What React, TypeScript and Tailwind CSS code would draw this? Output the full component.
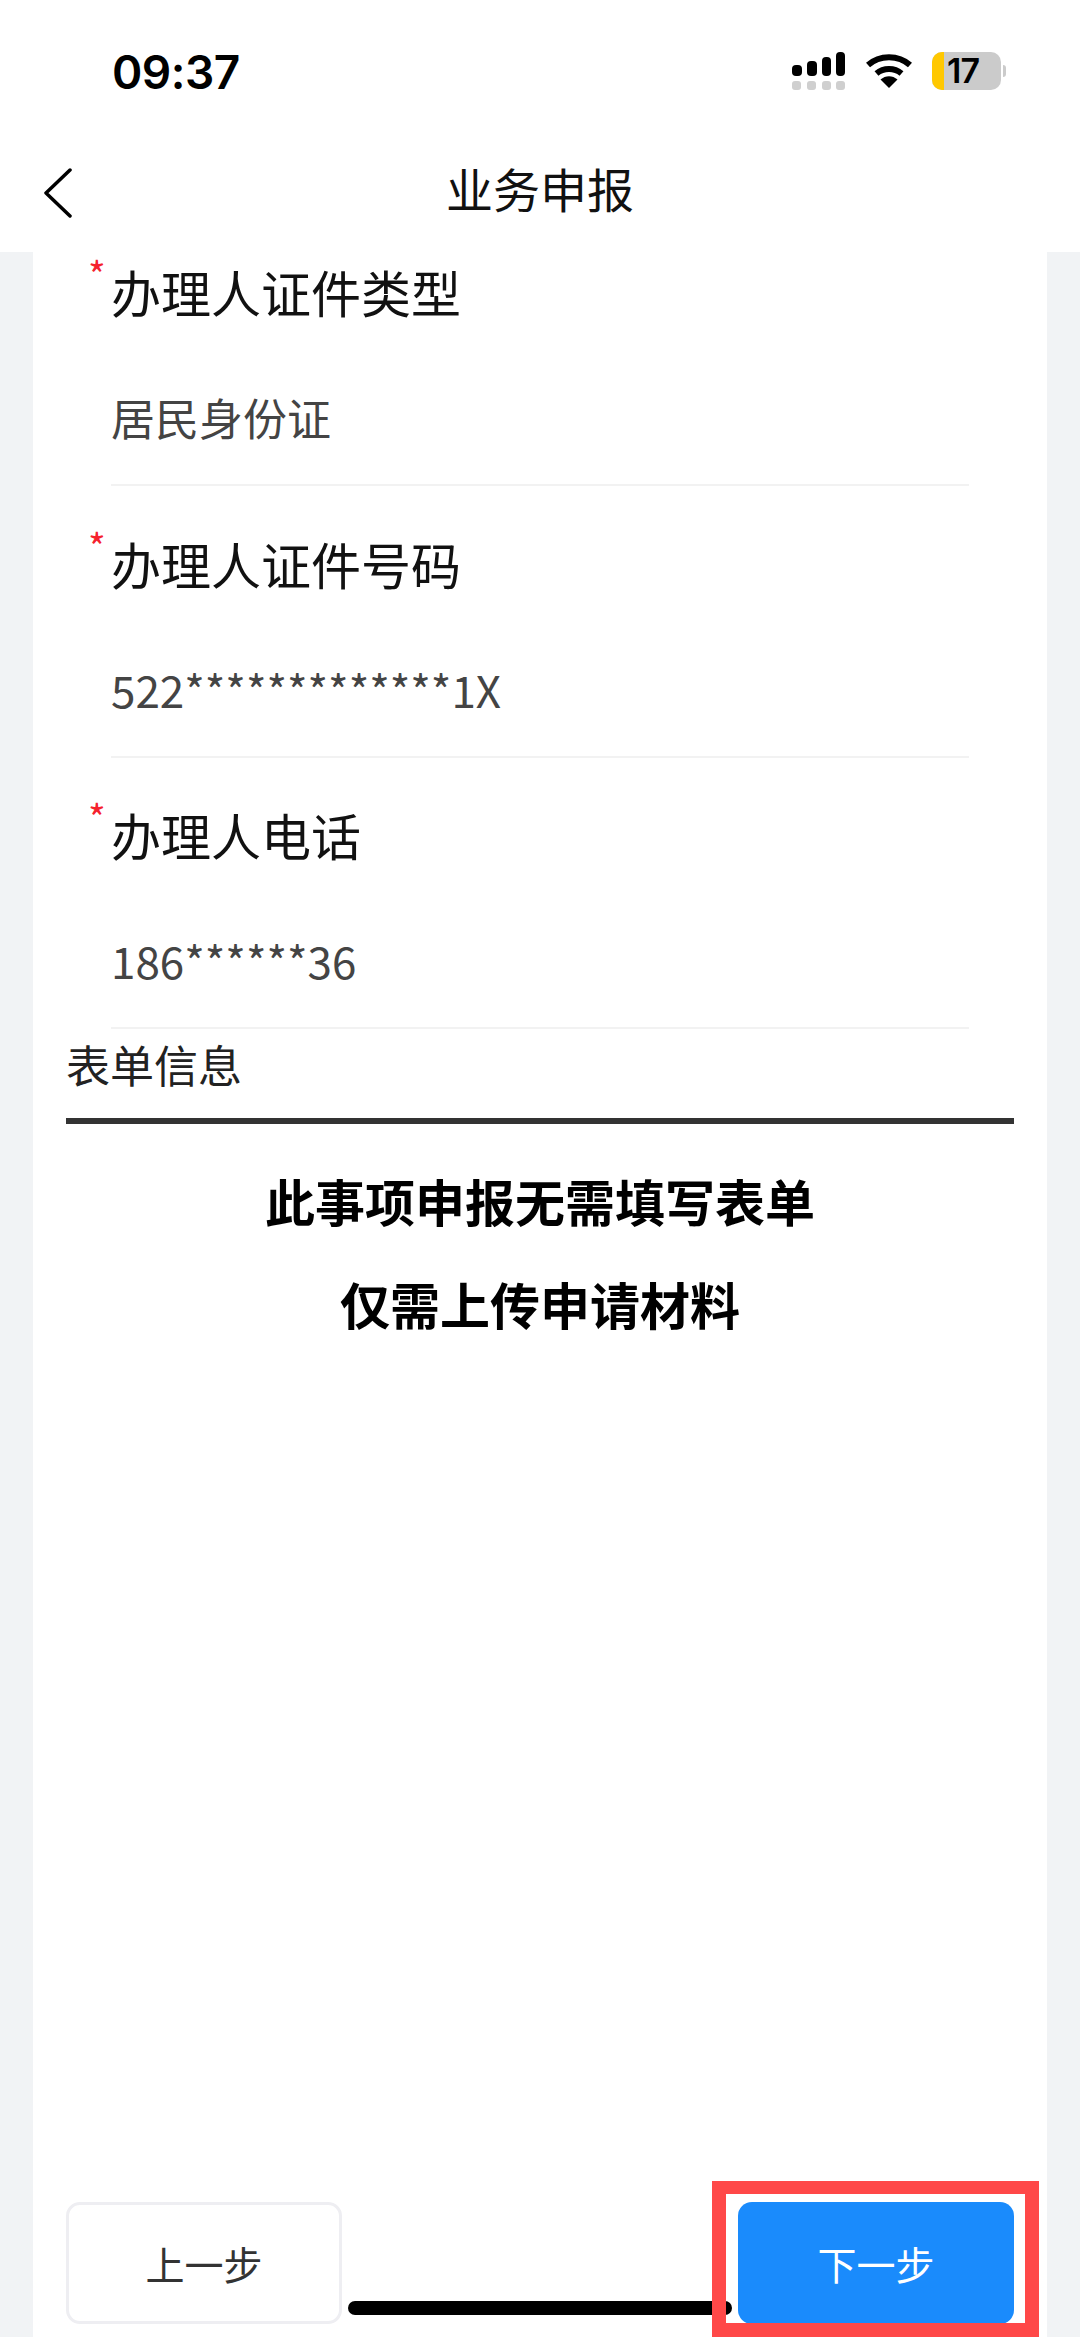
const cjk = "font-['Noto_Sans_CJK_SC',sans-serif]";

const fields = [
  { label: "办理人证件类型", value: "居民身份证" },
  { label: "办理人证件号码", value: "522*************1X" },
  { label: "办理人电话", value: "186******36" },
];

function SignalIcon() {
  return (
    <svg width="54" height="38" viewBox="0 0 54 38">
      <rect x="0" y="13" width="10" height="11" rx="4" fill="#000" />
      <rect x="15" y="9" width="10" height="15" rx="4" fill="#000" />
      <rect x="30" y="5" width="9" height="19" rx="4" fill="#000" />
      <rect x="44" y="0" width="9" height="24" rx="4" fill="#000" />
      <rect x="0" y="29" width="9" height="9" rx="3" fill="#cfcfcf" />
      <rect x="15" y="29" width="9" height="9" rx="3" fill="#cfcfcf" />
      <rect x="30" y="29" width="9" height="9" rx="3" fill="#cfcfcf" />
      <rect x="44" y="29" width="9" height="9" rx="3" fill="#cfcfcf" />
    </svg>
  );
}

function WifiIcon() {
  return (
    <svg width="46" height="36" viewBox="0 0 46 36" fill="none">
      <path d="M2 12C13.5 1.5 32.5 1.5 44 12" stroke="#000" strokeWidth="6" />
      <path d="M10.5 20.5C17.5 14.5 28.5 14.5 35.5 20.5" stroke="#000" strokeWidth="6" />
      <path d="M14.5 26.5C19.5 22 26.5 22 31.5 26.5L23 35Z" fill="#000" />
    </svg>
  );
}

function Battery() {
  return (
    <div className="flex items-center gap-[2px]">
      <div className="flex h-[38px] w-[69px] items-center rounded-[10px] bg-[#cbcbcb]">
        <div className="h-full w-[12px] rounded-l-[10px] bg-[#ffc800]" />
        <span className="ml-[3px] font-['Inter',sans-serif] text-[34px] font-semibold leading-none tracking-[-1px] text-black">17</span>
      </div>
      <div className="h-[12px] w-[3px] rounded-r-full bg-[#cbcbcb]" />
    </div>
  );
}

export default function App() {
  return (
    <div className={`relative flex h-[2337px] w-[1080px] flex-col overflow-hidden bg-[#f1f3f5] ${cjk}`}>
      {/* Status bar + title */}
      <div className="h-[252px] shrink-0 bg-white">
        <div className="flex h-[144px] items-start justify-between pl-[112px] pr-[74px] pt-[46px]">
          <span className="font-['Inter',sans-serif] text-[46px] font-semibold leading-[52px] tracking-[-0.5px] text-black">09:37</span>
          <div className="flex items-center gap-[20px] pt-[6px]">
            <SignalIcon />
            <WifiIcon />
            <Battery />
          </div>
        </div>
        <div className="relative flex h-[92px] items-center justify-center">
          <svg className="absolute left-[44px] top-[24px]" width="28" height="50" viewBox="0 0 28 50" fill="none">
            <path d="M26 2L2 25L26 48" stroke="#000" strokeWidth="3.5" strokeLinecap="round" strokeLinejoin="round" />
          </svg>
          <span className="mb-[6px] text-[47px] leading-none text-[#111]">业务申报</span>
        </div>
      </div>

      {/* Form card */}
      <div className="mx-[33px] flex min-h-0 flex-1 flex-col bg-white">
        <div className="px-[78px]">
          {fields.map((f) => (
            <div key={f.label} className="flex h-[271.5px] flex-col justify-end border-b-2 border-[#f2f2f2] first:h-[234px]">
              <div className="relative flex h-[60px] items-center text-[50px] leading-none text-[#111]">
                <span className="absolute left-[-23px] top-[-6px] text-[38px] leading-none text-[#f5222d]">*</span>
                {f.label}
              </div>
              <div className="mb-[37px] mt-[66px] flex h-[60px] items-center text-[44px] leading-none text-[#444]">{f.value}</div>
            </div>
          ))}
        </div>

        <div className="px-[33px]">
          <div className="flex h-[95px] items-center border-b-[6px] border-[#333] pb-[20px] text-[44px] leading-none text-[#222]">表单信息</div>
          <div className="pt-[25px] text-center text-[50px] font-bold leading-[103px] text-black">
            <p>此事项申报无需填写表单</p>
            <p>仅需上传申请材料</p>
          </div>
        </div>

        <div className="mt-auto flex justify-between px-[33px] pb-[13px]">
          <button className="flex h-[122px] w-[276px] items-center justify-center rounded-[14px] border-[3px] border-[#eeeef2] bg-white text-[39px] text-[#333]">上一步</button>
          <button className="flex h-[122px] w-[276px] items-center justify-center rounded-[14px] bg-[#1a8bfc] text-[39px] text-white">下一步</button>
        </div>
      </div>

      {/* Home indicator */}
      <div className="absolute left-[348px] top-[2301px] h-[14px] w-[384px] rounded-full bg-black" />

      {/* Red annotation box */}
      <div className="absolute left-[712px] top-[2181px] h-[156px] w-[327px] border-x-[14px] border-b-[14px] border-t-[13px] border-[#ff4848]" />
    </div>
  );
}
